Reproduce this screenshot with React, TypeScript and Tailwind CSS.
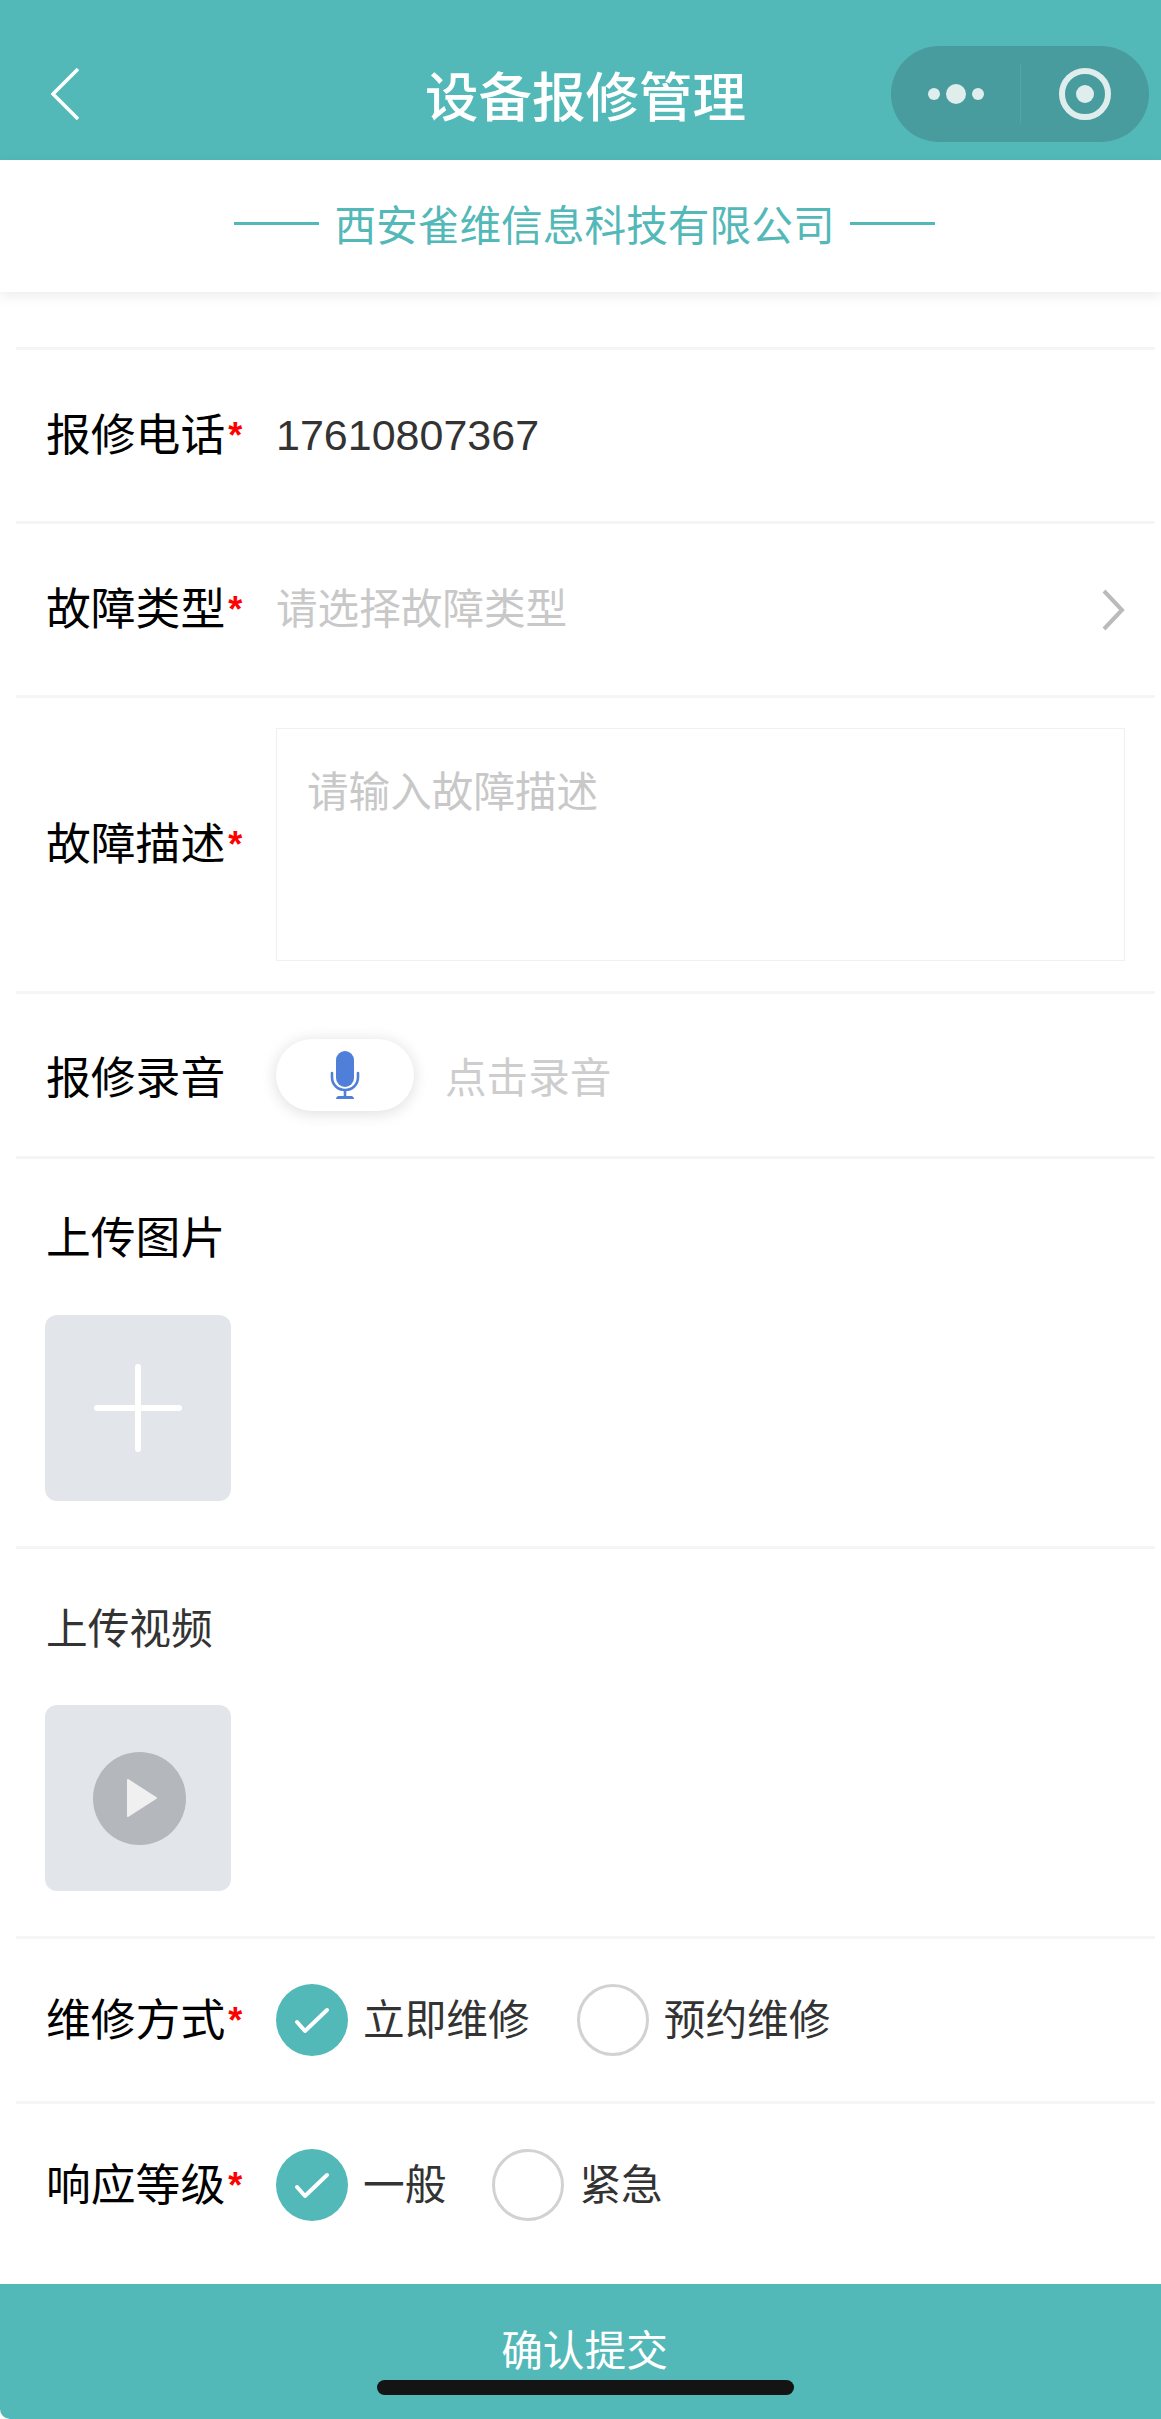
const font = "font-['Noto_Sans_CJK_SC','Noto_Sans',sans-serif]";

function Label({ text, required = true }: { text: string; required?: boolean }) {
  return (
    <div className="w-[260px] shrink-0 pl-[30px] text-[44.8px] leading-[60px] text-black whitespace-nowrap">
      {text}
      {required && <span className="relative top-[-3px] ml-[3px] font-['Liberation_Sans',sans-serif] text-[36px] font-bold text-[#ff0000]">*</span>}
    </div>
  );
}

function Radio({ text, checked = false, gap }: { text: string; checked?: boolean; gap: string }) {
  return (
    <div className={`flex items-center ${gap}`}>
      {checked ? (
        <div className="flex h-[72px] w-[72px] items-center justify-center rounded-full bg-[#53b8b8]">
          <svg width="36" height="27" viewBox="0 0 36 27" fill="none">
            <path d="M3 15 L11 24 L33 3" stroke="white" strokeWidth="4" strokeLinecap="round" strokeLinejoin="round" />
          </svg>
        </div>
      ) : (
        <div className="h-[72px] w-[72px] rounded-full border-[3px] border-[#d2d2d2]" />
      )}
      <span className="relative top-[-3px] ml-[15px] text-[41.7px] leading-[60px] text-[#333]">{text}</span>
    </div>
  );
}

export default function App() {
  return (
    <div className={`relative flex h-[2419px] w-[1161px] flex-col overflow-hidden bg-white ${font}`}>
      <header className="flex h-[160px] shrink-0 items-center bg-[#53b8b8] pt-[28px]">
        <svg className="ml-[51px]" width="28" height="52" viewBox="0 0 28 52" fill="none">
          <path d="M27 1 L2 26 L27 51" stroke="white" strokeWidth="3.5" />
        </svg>
        <h1 className="ml-[346px] text-[53.5px] font-medium leading-[70px] text-white">设备报修管理</h1>
        <div className="ml-auto mr-[12px] flex h-[96px] w-[258px] items-center rounded-[48px] bg-[#489c9d]">
          <div className="flex w-[129px] items-center justify-center gap-[10px] pl-[1px]">
            <span className="h-[12px] w-[12px] rounded-full bg-[#dfeded]" />
            <span className="ml-[-4px] mr-[-4px] h-[20px] w-[20px] rounded-full bg-[#dfeded]" />
            <span className="h-[12px] w-[12px] rounded-full bg-[#dfeded]" />
          </div>
          <div className="h-[60px] w-px bg-[#53a5a6]" />
          <div className="flex flex-1 items-center justify-center">
            <div className="flex h-[52px] w-[52px] items-center justify-center rounded-full border-[6px] border-[#dfeded]">
              <span className="h-[18px] w-[18px] rounded-full bg-[#dfeded]" />
            </div>
          </div>
        </div>
      </header>

      <div className="relative flex h-[132px] shrink-0 items-center justify-center bg-white pb-[6px] pl-[8px] shadow-[0_4px_12px_rgba(0,0,0,0.08)]">
        <span className="h-[3px] w-[85px] bg-[#53b8b8]" />
        <span className="mx-[15px] text-[41.7px] leading-[60px] text-[#53b8b8]">西安雀维信息科技有限公司</span>
        <span className="h-[3px] w-[85px] bg-[#53b8b8]" />
      </div>

      <main className="ml-[16px] mr-[6px] mt-[55px] flex-1">
        <div className="flex h-[174px] items-center border-t-[3px] border-[#f5f5f5]">
          <Label text="报修电话" />
          <span className="font-['Liberation_Sans',sans-serif] text-[43px] text-[#333]">17610807367</span>
        </div>
        <div className="flex h-[174px] items-center border-t-[3px] border-[#f5f5f5]">
          <Label text="故障类型" />
          <span className="relative top-[-3px] text-[41.6px] text-[#c8c8c8]">请选择故障类型</span>
          <svg className="ml-auto mr-[30px]" width="24" height="42" viewBox="0 0 24 42" fill="none">
            <path d="M3 2 L21 21 L3 40" stroke="#bbbbbb" strokeWidth="4" />
          </svg>
        </div>
        <div className="flex h-[296px] items-center border-t-[3px] border-[#f5f5f5]">
          <Label text="故障描述" />
          <div className="mr-[30px] h-[233px] flex-1 border border-[#f0f0f0] px-[30px] pt-[30px] text-[41.6px] leading-[60px] text-[#c8c8c8]">
            请输入故障描述
          </div>
        </div>
        <div className="flex h-[165px] items-center border-t-[3px] border-[#f5f5f5]">
          <Label text="报修录音" required={false} />
          <div className="flex h-[72px] w-[138px] items-center justify-center rounded-[36px] bg-white shadow-[0_2px_16px_rgba(0,0,0,0.14)]">
            <svg width="30" height="48" viewBox="0 0 30 48" fill="none">
              <rect x="6" y="0" width="18" height="36" rx="9" fill="#4f7fd9" />
              <path d="M2 22 V26 C2 34 8 39 15 39 C22 39 28 34 28 26 V22" stroke="#4f7fd9" strokeWidth="2.6" strokeLinecap="round" />
              <path d="M15 39 V45" stroke="#4f7fd9" strokeWidth="2.6" />
              <path d="M6 48 C6 45.5 8 45 10 45 H20 C22 45 24 45.5 24 48 Z" fill="#4f7fd9" />
            </svg>
          </div>
          <span className="ml-[31px] mt-[1px] text-[41.6px] text-[#cdcdcd]">点击录音</span>
        </div>
        <div className="h-[390px] border-t-[3px] border-[#f5f5f5] pl-[29px] pt-[42px]">
          <div className="pl-[1px] text-[44.8px] leading-[68px] text-black">上传图片</div>
          <div className="mt-[46px] flex h-[186px] w-[186px] items-center justify-center rounded-[12px] bg-[#e2e5ea]">
            <svg width="88" height="88" viewBox="0 0 88 88">
              <rect x="41" y="0" width="6" height="88" rx="3" fill="white" />
              <rect x="0" y="41" width="88" height="6" rx="3" fill="white" />
            </svg>
          </div>
        </div>
        <div className="h-[390px] border-t-[3px] border-[#f5f5f5] pl-[29px] pt-[43px]">
          <div className="pl-[1px] text-[41.7px] leading-[68px] text-[#333]">上传视频</div>
          <div className="mt-[45px] flex h-[186px] w-[186px] items-center justify-center rounded-[12px] bg-[#e2e5ea]">
            <div className="ml-[2px] flex h-[93px] w-[93px] items-center justify-center rounded-full bg-[#b4b7bc]">
              <svg className="ml-[5px]" width="32" height="40" viewBox="0 0 32 40">
                <path d="M2 2 L30 20 L2 38 Z" fill="#f0f0f0" stroke="#f0f0f0" strokeWidth="2" strokeLinejoin="round" />
              </svg>
            </div>
          </div>
        </div>
        <div className="flex h-[165px] items-center border-t-[3px] border-[#f5f5f5]">
          <Label text="维修方式" />
          <Radio text="立即维修" checked gap="mr-[47px]" />
          <Radio text="预约维修" gap="" />
        </div>
        <div className="flex h-[165px] items-center border-t-[3px] border-[#f5f5f5]">
          <Label text="响应等级" />
          <Radio text="一般" checked gap="mr-[46px]" />
          <Radio text="紧急" gap="" />
        </div>
      </main>

      <footer className="flex h-[135px] shrink-0 justify-center rounded-bl-[10px] bg-[#53b8b8] pl-[8px] pt-[34px]">
        <span className="text-[41.7px] leading-[60px] text-white">确认提交</span>
      </footer>
      <div className="absolute bottom-[24px] left-[377px] h-[15px] w-[417px] rounded-full bg-[#141414]" />
    </div>
  );
}
